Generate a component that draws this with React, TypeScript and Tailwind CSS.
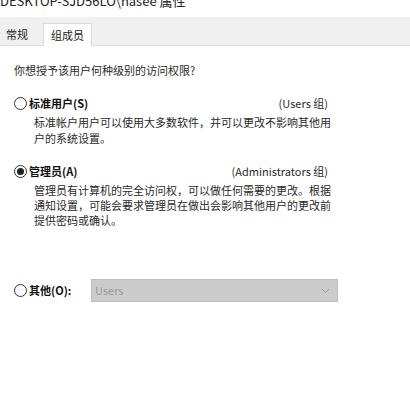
import React from 'react';

const font = { fontFamily: '"Noto Sans CJK SC", "Noto Sans", sans-serif' };

const Radio: React.FC<{ checked?: boolean }> = ({ checked }) => (
  <span className="flex h-[13px] w-[13px] shrink-0 items-center justify-center rounded-full border border-[#333] bg-white">
    {checked && <span className="h-[7px] w-[7px] rounded-full bg-[#222]" />}
  </span>
);

const App: React.FC = () => {
  return (
    <div className="h-[400px] w-[410px] overflow-hidden bg-white text-[11px] text-[#2a2a2a]" style={font}>
      {/* clipped window title */}
      <div className="h-[17px] overflow-hidden">
        <div className="-mt-[7px] text-[13px] leading-[16px] text-[#222]">DESKTOP-SJD56LO\hasee 属性</div>
      </div>

      {/* tabs */}
      <div className="flex h-[29px] items-end border-b border-[#dedede] bg-[#f0f0f0]">
        <div className="flex h-[22px] w-[43px] items-center pl-[6px] text-[#222]">常规</div>
        <div className="-mb-px flex h-[23px] w-[49px] items-center border-x border-t border-[#d9d9d9] bg-white pl-[7px] text-[#222]">
          组成员
        </div>
      </div>

      <div className="pl-[14px] pr-[82px]">
        <div className="mt-[16px] leading-[16px]">你想授予该用户何种级别的访问权限?</div>

        <div className="mt-[17px] flex h-[16px] items-center">
          <Radio />
          <span className="ml-[2px] font-bold text-[#111]">标准用户(S)</span>
          <span className="ml-auto">(Users 组)</span>
        </div>
        <div className="mt-[3px] pl-[20px] leading-[16px] whitespace-nowrap">
          <div>标准帐户用户可以使用大多数软件，并可以更改不影响其他用</div>
          <div>户的系统设置。</div>
        </div>

        <div className="mt-[17px] flex h-[16px] items-center">
          <Radio checked />
          <span className="ml-[2px] font-bold text-[#111]">管理员(A)</span>
          <span className="ml-auto">(Administrators 组)</span>
        </div>
        <div className="mt-[4px] pl-[20px] leading-[15px] whitespace-nowrap">
          <div>管理员有计算机的完全访问权，可以做任何需要的更改。根据</div>
          <div>通知设置，可能会要求管理员在做出会影响其他用户的更改前</div>
          <div>提供密码或确认。</div>
        </div>

        <div className="mt-[51px] flex h-[23px] items-center">
          <Radio />
          <span className="ml-[2px] w-[62px] shrink-0 font-bold text-[#111]">其他(O):</span>
          <div className="flex h-[23px] w-[247px] shrink-0 items-center justify-between border border-[#bdbdbd] bg-[#cccccc] pl-[3px] pr-[7px]">
            <span className="text-[#9a9a9a]">Users</span>
            <svg width="9" height="6" viewBox="0 0 9 6" fill="none">
              <path d="M1 1l3.5 3.5L8 1" stroke="#9a9a9a" strokeWidth="1" />
            </svg>
          </div>
        </div>
      </div>
    </div>
  );
};

export default App;
